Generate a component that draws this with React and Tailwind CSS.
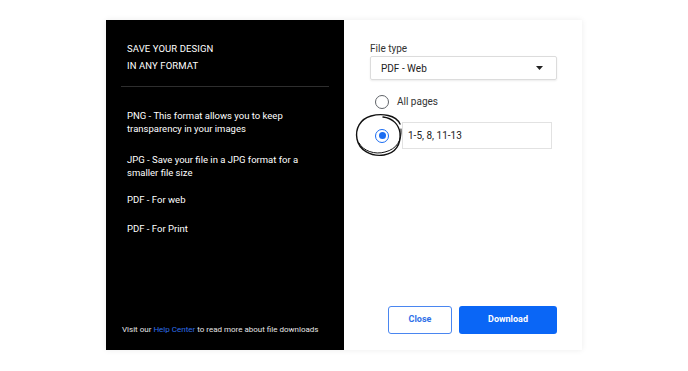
import React from 'react';

const formats = [
  { id: 'png', text: 'PNG - This format allows you to keep transparency in your images', mt: 'mt-[23px]' },
  { id: 'jpg', text: 'JPG - Save your file in a JPG format for a smaller file size', mt: 'mt-[19px]' },
  { id: 'web', text: 'PDF - For web', mt: 'mt-[15px]' },
  { id: 'print', text: 'PDF - For Print', mt: 'mt-[16px]' },
];

function Radio({ checked }) {
  if (checked) {
    return (
      <span className="flex h-[14px] w-[14px] shrink-0 items-center justify-center rounded-full border-[1.5px] border-[#1a6cf2]">
        <span className="h-[7px] w-[7px] rounded-full bg-[#1a6cf2]" />
      </span>
    );
  }
  return <span className="h-[14px] w-[14px] shrink-0 rounded-full border-[1.5px] border-[#5f6368]" />;
}

export default function App() {
  return (
    <div className="flex h-[371px] w-[688px] justify-center bg-white pt-[20px] font-['Roboto',sans-serif]">
      <div className="flex h-[330px] w-[476px] shadow-[0_0_6px_rgba(0,0,0,0.08)]">
        {/* Left info panel */}
        <div className="flex w-[238px] flex-col bg-black pt-[20px] pb-[14px] text-white">
          <div className="pl-[21px] text-[9.5px] leading-[17px] tracking-[0.1px]">
            <p>SAVE YOUR DESIGN</p>
            <p>IN ANY FORMAT</p>
          </div>
          <div className="mx-[15px] mt-[12px] h-px bg-[#2e2e2e]" />
          <div className="pl-[21px] pr-[34px] text-[9.5px] leading-[12.5px]">
            {formats.map((f) => (
              <p key={f.id} className={f.mt}>{f.text}</p>
            ))}
          </div>
          <p className="mt-auto pl-[16px] text-[8px] leading-[12px] text-[#e5e5e5]">
            Visit our <span className="text-[#2f6fe8]">Help Center</span> to read more about file downloads
          </p>
        </div>

        {/* Right options panel */}
        <div className="relative flex w-[238px] flex-col bg-white pt-[23px] pb-[16px] pl-[26px] pr-[25px]">
          <label className="text-[10px] leading-[12px] text-[#333]">File type</label>
          <div className="mt-[1px] flex h-[24px] items-center justify-between rounded-[2px] border border-[#dcdcdc] pl-[10px] pr-[13px] text-[10px] text-[#222] shadow-[0_1px_2px_rgba(0,0,0,0.08)]">
            <span>PDF - Web</span>
            <svg width="7" height="4" viewBox="0 0 7 4"><path d="M0 0h7L3.5 4z" fill="#222" /></svg>
          </div>

          <div className="mt-[14px] flex items-center gap-[8px] pl-[5px] text-[10px] text-[#333]">
            <Radio />
            <span>All pages</span>
          </div>

          <div className="mt-[13px] flex items-center gap-[13px] pl-[5px] pr-[5px]">
            <Radio checked />
            <div className="flex h-[27px] flex-1 items-center border border-[#e2e2e2] pl-[5px] text-[10px] text-[#222]">
              1-5, 8, 11-13
            </div>
          </div>

          {/* hand-drawn highlight */}
          <svg className="pointer-events-none absolute left-[10px] top-[92px]" width="52" height="48" viewBox="0 0 52 48" fill="none">
            <path d="M46 12C42 3 28 1 17 4 6 7 1 17 3 27c2 11 14 18 27 16 12-2 17-11 16-22-1-8-7-15-17-16" stroke="#111" strokeWidth="1.4" strokeLinecap="round" />
            <path d="M47 17c1 11-4 20-16 23-10 3-22-1-26-9" stroke="#111" strokeWidth="1" strokeLinecap="round" />
          </svg>

          <div className="mt-auto flex justify-end gap-[7px]">
            <button className="h-[28px] w-[64px] rounded-[3px] border-[1.5px] border-[#4a86f0] text-[9px] font-bold text-[#2f6fe8]">
              Close
            </button>
            <button className="h-[28px] w-[98px] rounded-[3px] bg-[#0a66f6] text-[9px] font-bold text-white">
              Download
            </button>
          </div>
        </div>
      </div>
    </div>
  );
}
